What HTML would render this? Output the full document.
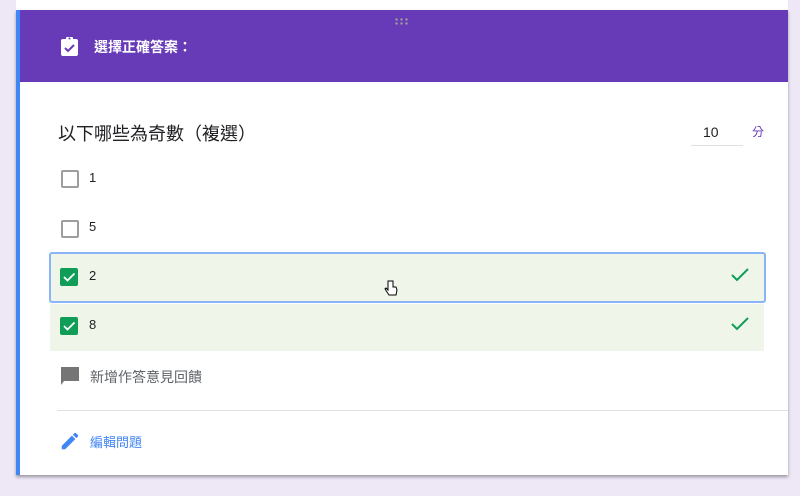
<!DOCTYPE html>
<html><head><meta charset="utf-8"><style>
*{margin:0;padding:0;box-sizing:border-box}
body{width:800px;height:496px;background:#ede7f6;position:relative;overflow:hidden;font-family:"Liberation Sans","Noto Sans CJK TC",sans-serif}
.abs{position:absolute}
.cb{position:absolute;width:18px;height:18px;border:2px solid #9e9e9e;border-radius:2px;background:#fff}
.cbk{position:absolute;width:18px;height:18px;border-radius:2px;background:#0f9d58}
.lbl{position:absolute;font-size:13px;color:#202124}
</style></head><body>
<div class="abs" style="left:16px;top:0;width:772px;height:10px;background:#fff"></div>
<div class="abs" style="left:16px;top:10px;width:772px;height:465px;background:#fff;box-shadow:0 2px 3px rgba(0,0,0,.35)"></div>
<div class="abs" style="left:16px;top:10px;width:772px;height:72px;background:#673ab7"></div>
<div class="abs" style="left:16px;top:10px;width:4px;height:465px;background:#4285f4"></div>
<svg class="abs" style="left:395px;top:18px" width="14" height="8"><g fill="#9e9e9e"><circle cx="1.5" cy="1.5" r="1.2"/><circle cx="6.5" cy="1.5" r="1.2"/><circle cx="11.5" cy="1.5" r="1.2"/><circle cx="1.5" cy="5.5" r="1.2"/><circle cx="6.5" cy="5.5" r="1.2"/><circle cx="11.5" cy="5.5" r="1.2"/></g></svg>
<svg class="abs" style="left:60px;top:36px" width="19" height="20" viewBox="0 0 19 20"><rect x="1" y="3" width="17" height="17" rx="2" fill="#fff"/><rect x="6" y="1" width="7" height="4" rx="1" fill="#fff"/><circle cx="9.5" cy="2.5" r="1" fill="#673ab7"/><path d="M5 12l3 3 6-6" stroke="#673ab7" stroke-width="2" fill="none"/></svg>
<div class="abs" style="left:94px;top:37px;color:#fff;font-size:14px;font-weight:bold">選擇正確答案：</div>
<div class="abs" style="left:58px;top:120px;font-size:18px;color:#202124">以下哪些為奇數（複選）</div>
<div class="abs" style="left:703px;top:124px;font-size:14px;color:#202124">10</div>
<div class="abs" style="left:691px;top:145px;width:52px;height:1px;background:#e0e0e0"></div>
<div class="abs" style="left:752px;top:123px;font-size:12px;color:#673ab7">分</div>
<div class="cb" style="left:61px;top:170px"></div><div class="lbl" style="left:89px;top:170px">1</div>
<div class="cb" style="left:61px;top:220px"></div><div class="lbl" style="left:89px;top:219px">5</div>
<div class="abs" style="left:49px;top:252px;width:717px;height:51px;background:#eff6e9;border:2px solid #8ab4f8;border-radius:3px"></div>
<div class="abs" style="left:50px;top:304px;width:714px;height:47px;background:#eff6e9"></div>
<div class="cbk" style="left:60px;top:268px"></div>
<div class="cbk" style="left:60px;top:317px"></div>
<svg class="abs" style="left:60px;top:268px" width="18" height="18"><path d="M4 9l3.5 3.5 7-7" stroke="#fff" stroke-width="1.8" fill="none"/></svg>
<svg class="abs" style="left:60px;top:317px" width="18" height="18"><path d="M4 9l3.5 3.5 7-7" stroke="#fff" stroke-width="1.8" fill="none"/></svg>
<div class="lbl" style="left:89px;top:268px">2</div>
<div class="lbl" style="left:89px;top:317px">8</div>
<svg class="abs" style="left:730px;top:267px" width="20" height="16"><path d="M2 8l5 5 11-11" stroke="#0f9d58" stroke-width="2" fill="none"/></svg>
<svg class="abs" style="left:730px;top:316px" width="20" height="16"><path d="M2 8l5 5 11-11" stroke="#0f9d58" stroke-width="2" fill="none"/></svg>
<svg class="abs" style="left:384px;top:280px" width="14" height="18" viewBox="0 0 14 18"><path d="M4 1v9l-2-2-1 1 4 6h7l1-5-1-3-3 0V1z" fill="#fff" stroke="#000" stroke-width="1"/></svg>
<svg class="abs" style="left:59px;top:365px" width="22" height="22" viewBox="0 0 22 22"><path d="M2 2h18v14H5l-3 4z" fill="#757575"/></svg>
<div class="abs" style="left:90px;top:367px;font-size:14px;color:#5f6368">新增作答意見回饋</div>
<div class="abs" style="left:57px;top:410px;width:731px;height:1px;background:#e0e0e0"></div>
<svg class="abs" style="left:59px;top:430px" width="22" height="22" viewBox="0 0 24 24"><path d="M3 17.25V21h3.75L17.81 9.94l-3.75-3.75L3 17.25zM20.71 7.04a1 1 0 000-1.41l-2.34-2.34a1 1 0 00-1.41 0l-1.83 1.83 3.75 3.75 1.83-1.83z" fill="#4285f4"/></svg>
<div class="abs" style="left:90px;top:432px;font-size:13px;color:#4285f4">編輯問題</div>
</body></html>
